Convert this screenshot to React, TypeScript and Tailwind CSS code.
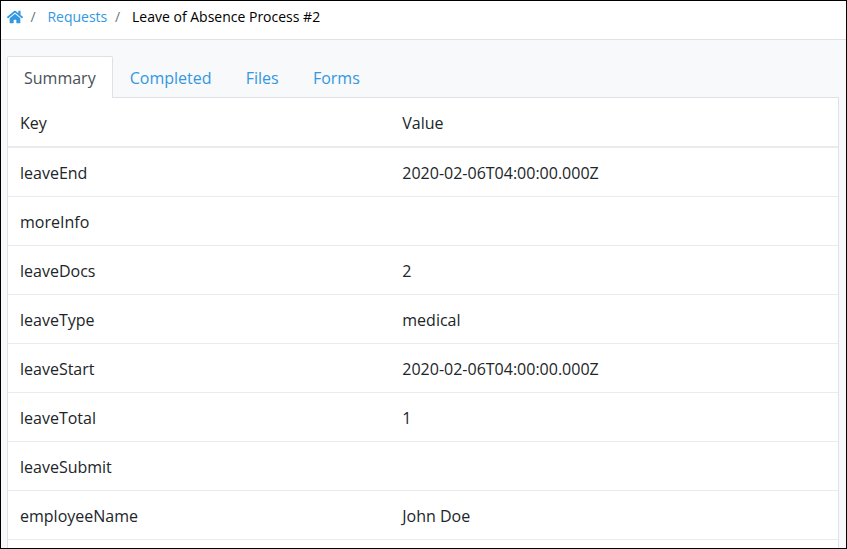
import React from "react";
import { FaHome } from "react-icons/fa";

const rows: [string, string][] = [
  ["leaveEnd", "2020-02-06T04:00:00.000Z"],
  ["moreInfo", ""],
  ["leaveDocs", "2"],
  ["leaveType", "medical"],
  ["leaveStart", "2020-02-06T04:00:00.000Z"],
  ["leaveTotal", "1"],
  ["leaveSubmit", ""],
  ["employeeName", "John Doe"],
];

const tabs = ["Completed", "Files", "Forms"];

export default function App() {
  return (
    <div className="h-[549px] w-[847px] overflow-hidden border border-black bg-[#f7f9fb] font-['Open_Sans',sans-serif] text-base text-[#212529]">
      <nav className="flex h-[39px] items-center border-b border-[#dee2e6] bg-white pb-[6px] pl-[6px] text-sm">
        <FaHome className="size-4 text-[#3397e1]" />
        <span className="ml-[7.5px] text-[#6c757d]">/</span>
        <a className="ml-[11.8px] text-[#3397e1]">Requests</a>
        <span className="ml-[7.8px] text-[#6c757d]">/</span>
        <span className="ml-[11.8px] text-black">Leave of Absence Process #2</span>
      </nav>
      <main className="pl-[6px] pr-[7px] pt-4">
        <div className="flex h-[42px]">
          <div className="h-[42px] rounded-t-[2px] border border-b-0 border-[#dee2e6] bg-white px-4 pt-[9px] text-[#495057]">Summary</div>
          <div className="flex grow border-b border-[#dee2e6]">
            {tabs.map((t) => (
              <a key={t} className="px-[17.1px] pt-[10px] text-[#3397e1]">{t}</a>
            ))}
          </div>
        </div>
        <div className="border-x border-[#dee2e6] bg-white">
          <div className="flex h-[50px] border-b-2 border-[#e9ecef] pt-[13px]">
            <div className="w-[382.3px] pl-3">Key</div>
            <div className="pl-3">Value</div>
          </div>
          {rows.map(([k, v]) => (
            <div key={k} className="flex h-[49px] border-b border-[#e9ecef] pt-[13px]">
              <div className="w-[382.3px] pl-3">{k}</div>
              <div className="pl-3">{v}</div>
            </div>
          ))}
          <div className="h-[49px]" />
        </div>
      </main>
    </div>
  );
}
